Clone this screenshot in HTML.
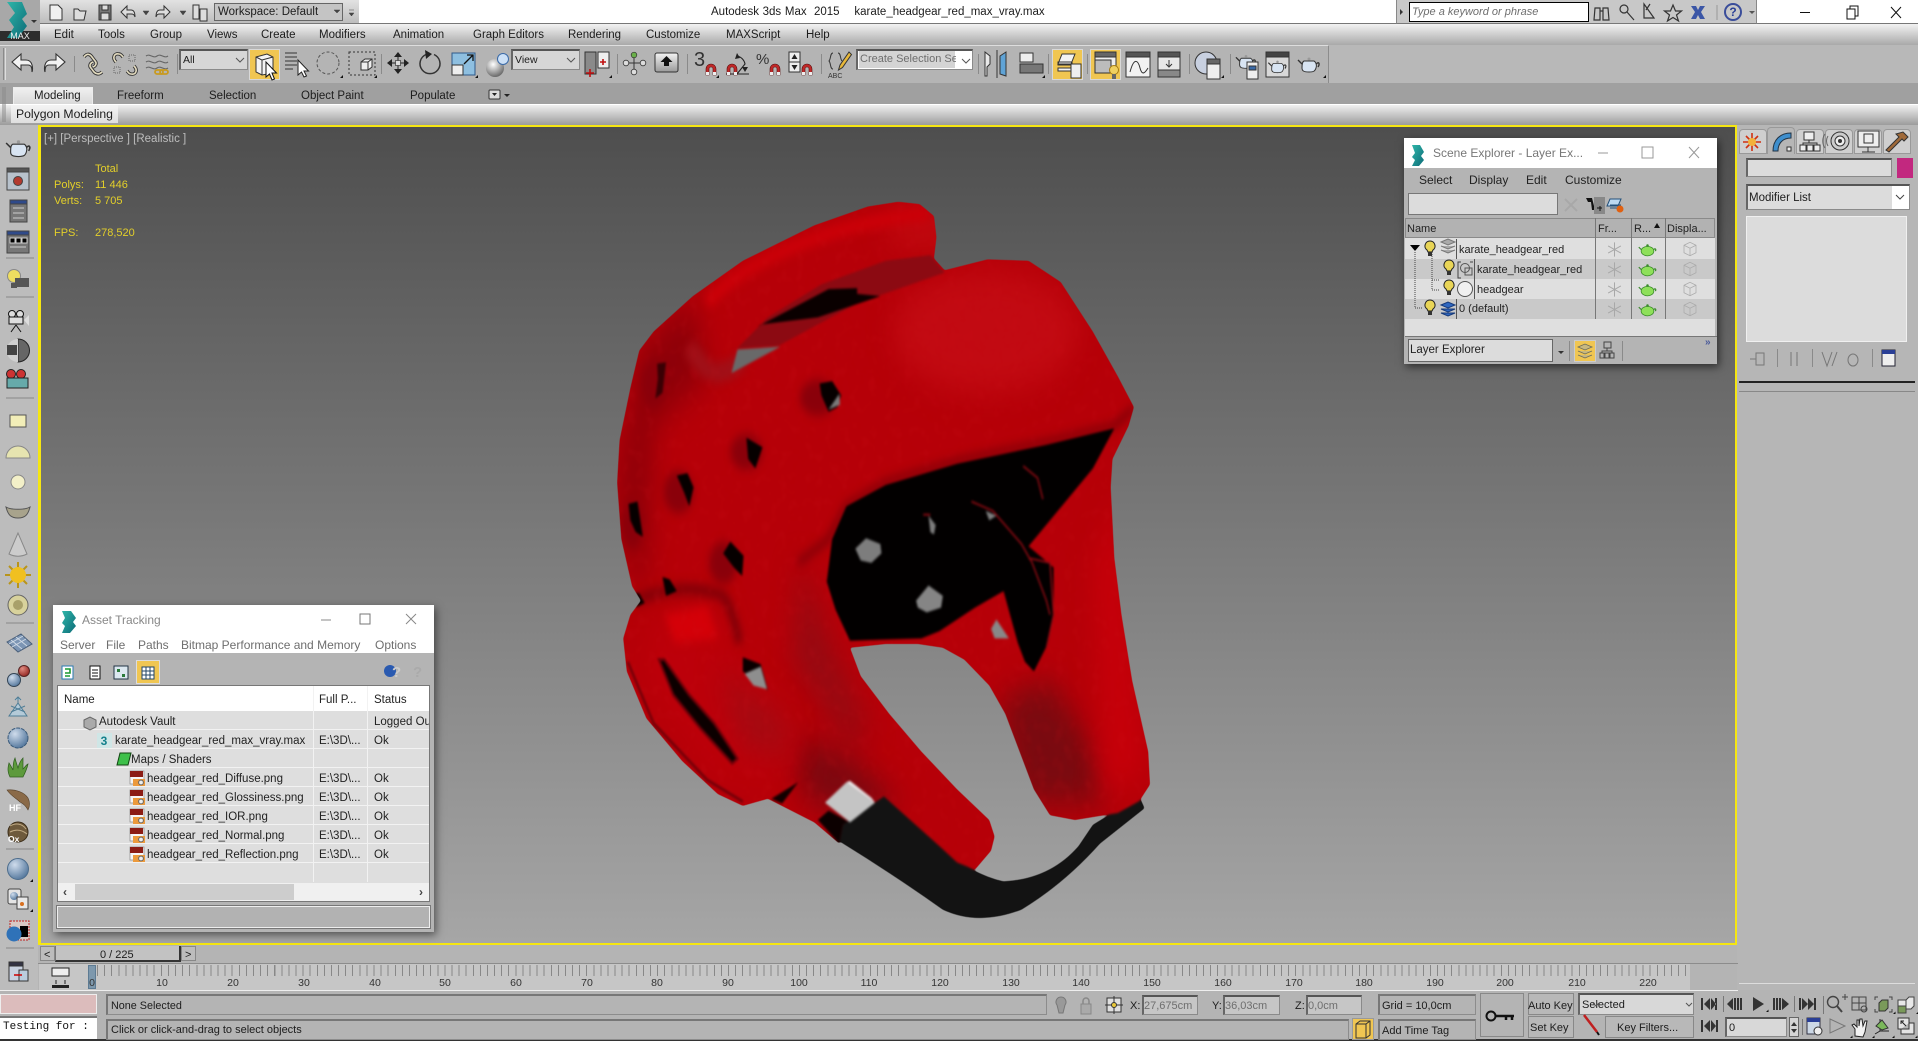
<!DOCTYPE html>
<html><head><meta charset="utf-8"><title>Autodesk 3ds Max 2015</title>
<style>
html,body{margin:0;padding:0;width:1918px;height:1041px;overflow:hidden;background:#b4b4b4}
body{position:relative;font-family:"Liberation Sans",sans-serif;font-size:11.5px;color:#1c1c1c}
.b{position:absolute;box-sizing:border-box}
.t{position:absolute;white-space:nowrap;line-height:14px}
.d{font-size:11.5px;color:#222}
.m{font-size:12px;color:#222}
.s{font-size:11px;color:#222}
.g{color:#6e6e6e}
.ag{color:#6e6e6e;font-size:12px}
.v{color:#e3cf2a;font-size:11px}
.in{position:absolute;box-sizing:border-box;background:#dcdcdc;border:1px solid #8a8a8a;border-top:2px solid #555;border-left:2px solid #666}
.box{position:absolute;box-sizing:border-box;border:1px solid #8c8c8c;border-top:2px solid #777;border-left:2px solid #777}
.sep{position:absolute;width:1px;background:#8a8a8a}
.hl{position:absolute;box-sizing:border-box;background:#f0c652;border:1px solid #d8d8d8}
.n{position:absolute;font-size:10.5px;color:#333;transform:translateX(-50%);line-height:12px;top:977px}
svg{position:absolute;left:0;top:0}
</style></head><body>

<!-- title bar -->
<div class="b" style="left:0;top:0;width:1918px;height:24px;background:#fff;border-bottom:1px solid #777"></div>
<div class="b" style="left:40px;top:0;width:319px;height:24px;background:linear-gradient(#e2e2e2,#bdbdbd);border-bottom:1px solid #777"></div>
<div class="b" style="left:214px;top:3px;width:129px;height:18px;background:#c4c4c4;border:1px solid #666"></div>
<div class="t" style="left:218px;top:5px">Workspace: Default</div>
<div class="t" style="left:711px;top:5px;word-spacing:0.5px">Autodesk 3ds Max&nbsp; 2015 &nbsp;&nbsp; karate_headgear_red_max_vray.max</div>
<div class="b" style="left:1396px;top:0;width:361px;height:24px;background:#c8c8c8;border-bottom:1px solid #777;border-left:1px solid #888;border-right:1px solid #888"></div>
<div class="b" style="left:1409px;top:2px;width:180px;height:20px;background:#fff;border:1px solid #000"></div>
<div class="t g" style="left:1412px;top:5px;font-style:italic;font-size:11px">Type a keyword or phrase</div>

<!-- menu -->
<div class="b" style="left:0;top:24px;width:1918px;height:21px;background:linear-gradient(#f2f2f2,#a9a9a9)"></div>
<div class="t" style="left:54px;top:28px">Edit</div><div class="t" style="left:98px;top:28px">Tools</div><div class="t" style="left:150px;top:28px">Group</div><div class="t" style="left:207px;top:28px">Views</div><div class="t" style="left:261px;top:28px">Create</div><div class="t" style="left:319px;top:28px">Modifiers</div><div class="t" style="left:393px;top:28px">Animation</div><div class="t" style="left:473px;top:28px">Graph Editors</div><div class="t" style="left:568px;top:28px">Rendering</div><div class="t" style="left:646px;top:28px">Customize</div><div class="t" style="left:726px;top:28px">MAXScript</div><div class="t" style="left:806px;top:28px">Help</div>

<!-- main toolbar -->
<div class="b" style="left:0;top:45px;width:1918px;height:38px;background:#b8b8b8"></div>
<div class="b" style="left:0;top:45px;width:1329px;height:39px;background:#b4b4b4;border-top:1px solid #ddd;border-right:1px solid #8c8c8c;border-bottom:1px solid #888"></div>
<div class="b" style="left:3px;top:48px;width:3px;height:32px;border-left:1px solid #8a8a8a;border-right:1px solid #ddd"></div>
<div class="in" style="left:179px;top:49px;width:69px;height:21px;background:#d6d6d6"></div><div class="t" style="left:183px;top:53px;font-size:10.5px">All</div>
<div class="hl" style="left:249px;top:49px;width:31px;height:31px"></div>
<div class="in" style="left:511px;top:49px;width:69px;height:21px;background:#d6d6d6"></div><div class="t" style="left:515px;top:53px;font-size:10.5px">View</div>
<div class="in" style="left:856px;top:49px;width:117px;height:21px;background:#fff"></div><div class="b" style="left:859px;top:51px;width:96px;height:17px;background:#d4d4d4"></div><div class="t g" style="left:860px;top:52px;width:96px;overflow:hidden;font-size:11px">Create Selection Se</div>
<div class="hl" style="left:1052px;top:49px;width:31px;height:31px"></div>
<div class="hl" style="left:1090px;top:49px;width:31px;height:31px"></div>
<div class="sep" style="left:74px;top:56px;height:16px"></div><div class="sep" style="left:177px;top:54px;height:20px"></div><div class="sep" style="left:381px;top:54px;height:20px"></div><div class="sep" style="left:617px;top:54px;height:20px"></div><div class="sep" style="left:687px;top:54px;height:20px"></div><div class="sep" style="left:821px;top:54px;height:20px"></div><div class="sep" style="left:978px;top:54px;height:20px"></div><div class="sep" style="left:1048px;top:54px;height:20px"></div><div class="sep" style="left:1087px;top:54px;height:20px"></div><div class="sep" style="left:1189px;top:54px;height:20px"></div><div class="sep" style="left:1230px;top:54px;height:20px"></div>

<!-- ribbon -->
<div class="b" style="left:0;top:83px;width:1918px;height:21px;background:#a0a0a0"></div>
<div class="b" style="left:13px;top:87px;width:80px;height:18px;background:linear-gradient(#f0f0f0,#d8d8d8);border:1px solid #ececec;border-bottom:none"></div>
<div class="t" style="left:34px;top:89px">Modeling</div><div class="t" style="left:117px;top:89px">Freeform</div><div class="t" style="left:209px;top:89px">Selection</div><div class="t" style="left:301px;top:89px">Object Paint</div><div class="t" style="left:410px;top:89px">Populate</div>
<div class="b" style="left:0;top:104px;width:1918px;height:21px;background:linear-gradient(#f0f0f0,#9c9c9c);border-top:1px solid #fff"></div>
<div class="b" style="left:11px;top:105px;width:107px;height:18px;background:linear-gradient(#f4f4f4,#dedede)"></div>
<div class="t" style="left:16px;top:107px;font-size:12.2px">Polygon Modeling</div>

<!-- left bar / right panel base -->
<div class="b" style="left:0;top:125px;width:38px;height:865px;background:#bcbcbc"></div>
<div class="b" style="left:1737px;top:125px;width:181px;height:865px;background:#b6b6b6"></div>

<!-- viewport -->
<div class="b" style="left:38px;top:125px;width:1699px;height:820px;border:2px solid #f5e612;border-left-width:3px;background:linear-gradient(#4e4e4e,#a6a6a6);overflow:hidden"></div>
<div class="t" style="left:44px;top:132px;color:#bdbdbd;font-size:11.5px">[+] [Perspective ] [Realistic ]</div>
<div class="t v" style="left:95px;top:162px">Total</div>
<div class="t v" style="left:54px;top:178px">Polys:</div><div class="t v" style="left:95px;top:178px">11 446</div>
<div class="t v" style="left:54px;top:194px">Verts:</div><div class="t v" style="left:95px;top:194px">5 705</div>
<div class="t v" style="left:54px;top:226px">FPS:</div><div class="t v" style="left:95px;top:226px">278,520</div>

<!-- helmet -->
<svg width="1918" height="1041" viewBox="0 0 1918 1041">
<defs>
<filter id="bl" filterUnits="userSpaceOnUse" x="-300" y="-300" width="2200" height="2200" color-interpolation-filters="sRGB"><feGaussianBlur stdDeviation="34"/></filter>
<filter id="bs" filterUnits="userSpaceOnUse" x="-300" y="-300" width="2200" height="2200" color-interpolation-filters="sRGB"><feGaussianBlur stdDeviation="10"/></filter>
<filter id="sm" filterUnits="userSpaceOnUse" x="-100" y="-100" width="1800" height="1800" color-interpolation-filters="sRGB"><feGaussianBlur stdDeviation="3"/><feComponentTransfer><feFuncA type="linear" slope="3" intercept="-1"/></feComponentTransfer></filter>
<filter id="nz" x="0" y="0" width="100%" height="100%" color-interpolation-filters="sRGB"><feTurbulence type="fractalNoise" baseFrequency="0.04" numOctaves="2" seed="4"/><feColorMatrix values="0 0 0 0 .82 0 0 0 0 .08 0 0 0 0 .12 0 0 0 3 -1.45"/></filter>
<clipPath id="hc"><path d="M835 25L895 30L935 55L942 100L935 145L965 170L1085 147L1200 150L1290 195L1380 300L1450 395L1495 460L1480 500L1435 570L1430 630L1440 780L1460 900L1490 1040L1535 1190L1540 1260L1510 1295L1450 1320L1330 1335L1260 1325L1215 1270L1175 1190L1135 1110L1090 1050L1020 995L960 970L890 962L800 962L700 970L730 1030L810 1110L900 1190L1000 1270L1090 1335L1105 1370L1095 1400L1050 1440L1000 1425L950 1390L795 1285L680 1345L670 1385L600 1340L470 1290L400 1305L330 1280L230 1210L130 1120L75 1020L65 950L85 900L115 870L90 840L60 740L48 620L55 530L85 420L110 340L150 300L260 225L400 150L600 75L750 35Z"/></clipPath>
</defs>
<g transform="translate(600 190) scale(.35714 .47193)"><g filter="url(#sm)">
<!-- strap -->
<path d="M670 1350L795 1280L950 1390Q1040 1450 1130 1465Q1260 1460 1340 1390L1380 1345L1510 1285L1525 1310L1400 1385Q1300 1470 1180 1525Q1060 1560 960 1525Q820 1450 670 1380Z" fill="#131313"/>
<g clip-path="url(#hc)">
<rect x="0" y="0" width="1600" height="1600" fill="#b60008"/>
<!-- shading -->
<ellipse cx="1080" cy="300" rx="260" ry="130" fill="#c20a12" filter="url(#bl)"/>
<ellipse cx="900" cy="80" rx="110" ry="40" fill="#c20a10" filter="url(#bl)"/>
<path d="M48 620L110 340L260 225L300 400L150 500L130 800L115 870L70 760Z" fill="#8e0009" filter="url(#bl)"/>
<path d="M250 330C300 400 340 400 400 360" stroke="#a01018" stroke-width="40" fill="none" filter="url(#bs)"/>
<path d="M300 240C400 150 650 70 920 50" stroke="#cc0008" stroke-width="30" fill="none" filter="url(#bs)"/>
<path d="M1180 1300L1120 1080L1260 1040L1380 1180L1420 1300Z" fill="#7a0a10" filter="url(#bl)"/>
<path d="M1450 650L1530 1230L1410 1290L1380 800Z" fill="#c6000a" filter="url(#bl)"/>
<path d="M560 780L640 950L760 1150L700 1180L540 1000Z" fill="#960a12" filter="url(#bl)"/>
<path d="M560 1160L700 1200L840 1300L720 1340L560 1280Z" fill="#7c0810" filter="url(#bl)"/>
<path d="M150 900L330 880L390 1000L540 1130L500 1260L320 1240L120 1040Z" fill="#bc000a" filter="url(#bl)"/>
<path d="M180 900L300 880L330 950L210 960Z" fill="#d40008" filter="url(#bs)"/>
<path d="M330 1010L520 1120L540 1200L400 1180Z" fill="#a40a12" filter="url(#bl)"/>
<path d="M100 870C190 840 280 840 345 860C365 880 380 920 390 960" stroke="#7a0008" stroke-width="20" fill="none" filter="url(#bs)"/>
<rect x="0" y="0" width="1600" height="1600" filter="url(#nz)" opacity=".14"/>
<!-- top strap gap -->
<path d="M385 335L470 270L620 200L800 150L925 138L937 150L965 175L720 240L500 330Z" fill="#8c0a12"/>
<path d="M440 290L640 210L720 208L720 220L785 225L610 270L450 285Z" fill="#0a0000"/>
<path d="M368 388L385 338L505 332Z" fill="#696969"/>
<!-- rim -->
<path d="M1495 462L1440 500L1250 535L1000 575L800 620L690 670L640 740L555 790" stroke="#7c0008" stroke-width="14" fill="none" filter="url(#bs)"/>
<!-- interior -->
<path d="M690 670L800 625L1000 580L1250 540L1440 505L1380 590L1200 755L1270 800L1270 900L1255 960L1215 1020L1190 1000L1170 960L1130 850L1050 885L950 935L900 950L700 955L660 890L635 830L650 740Z" fill="#020000"/>
<g fill="none" stroke="#8e0a12" stroke-width="4"><path d="M1040 660L1100 680L1180 750L1210 790L1250 870L1260 900"/><path d="M1185 585L1225 610L1240 655"/><path d="M1200 780L1260 790L1270 900L1250 970"/><path d="M905 688L925 688"/></g>
<g fill="#7d7d7d"><path d="M715 760L745 738L785 750L788 770L760 790L730 785Z"/><path d="M885 870L920 838L960 860L955 885L915 895L890 885Z" fill="#858585"/><path d="M920 690L940 710L935 730L925 725Z"/><path d="M1080 680L1110 690L1090 700Z"/><path d="M1095 930L1110 910L1145 950L1105 950Z" fill="#888"/></g>
<!-- vents -->
<g fill="#8a000a" filter="url(#bs)"><ellipse cx="610" cy="440" rx="50" ry="38"/><ellipse cx="410" cy="555" rx="45" ry="38"/><ellipse cx="220" cy="640" rx="42" ry="45"/><ellipse cx="90" cy="710" rx="30" ry="50"/><ellipse cx="345" cy="790" rx="40" ry="45"/><ellipse cx="150" cy="410" rx="35" ry="50"/></g>
<g fill="#060000"><path d="M615 410L650 405L675 435L665 460L640 470L620 435Z"/><path d="M410 525L455 545L435 590L415 570Z"/><path d="M215 605L245 600L262 630L250 670L235 640Z"/><path d="M80 665L105 660L120 735L100 725L85 700Z"/><path d="M345 770L365 745L402 775L398 818L375 800Z"/><path d="M175 820L195 825L215 850L185 860Z"/><path d="M90 850L110 855L125 875L100 885Z"/><path d="M160 368L185 365L175 430L155 442L162 400Z" fill="#3a0004"/></g>
<path d="M640 465L670 432L672 455Z" fill="#7a7a7a"/>
<!-- front pad -->
<path d="M165 995L180 995L250 1070L320 1130L385 1205L370 1215L280 1140L205 1070Z" fill="#0c0000" stroke="#700008" stroke-width="6"/>
<path d="M78 1000L150 1130L300 1250L400 1296" stroke="#6e0008" stroke-width="6" fill="none"/>
<path d="M400 990L450 1005L470 1060L400 1020Z" fill="#0a0000"/>
<path d="M405 1025L450 1010L468 1058L430 1050Z" fill="#8e8e8e"/>
<path d="M480 1290L555 1255L510 1300Z" fill="#120000"/>
<path d="M610 1335L640 1315L700 1340L670 1385Z" fill="#0c0000"/>
</g>
<path d="M630 1298L690 1255L770 1298L700 1340Z" fill="#c4c4c4"/><path d="M690 1255L770 1298L760 1288L700 1252Z" fill="#eee"/>
</g></g>
</svg>

<!-- Scene Explorer -->
<div class="b" style="left:1404px;top:138px;width:313px;height:226px;background:#b4b4b4;box-shadow:2px 3px 8px rgba(0,0,0,.55)"></div>
<div class="b" style="left:1404px;top:138px;width:313px;height:30px;background:#fff"></div>
<div class="t" style="left:1433px;top:146px;font-size:12px;color:#777">Scene Explorer - Layer Ex...</div>
<div class="t m" style="left:1419px;top:173px">Select</div><div class="t m" style="left:1469px;top:173px">Display</div><div class="t m" style="left:1526px;top:173px">Edit</div><div class="t m" style="left:1565px;top:173px">Customize</div>
<div class="b" style="left:1408px;top:193px;width:150px;height:22px;background:#dcdcdc;border:1px solid #777"></div>
<div class="b" style="left:1405px;top:218px;width:310px;height:20px;background:#b2b2b2;border:1px solid #8a8a8a"></div>
<div class="t s" style="left:1407px;top:222px">Name</div><div class="t s" style="left:1598px;top:222px">Fr...</div><div class="t s" style="left:1634px;top:222px">R...</div><div class="t s" style="left:1667px;top:222px">Displa...</div>
<div class="b" style="left:1405px;top:238px;width:310px;height:98px;background:#dfdfdf"></div>
<div class="b" style="left:1405px;top:259px;width:310px;height:20px;background:#c9c9c9"></div>
<div class="b" style="left:1405px;top:299px;width:310px;height:20px;background:#c9c9c9"></div>
<div class="sep" style="left:1595px;top:218px;height:101px;background:#777"></div><div class="sep" style="left:1631px;top:218px;height:101px;background:#777"></div><div class="sep" style="left:1665px;top:218px;height:101px;background:#777"></div>
<div class="sep" style="left:1456px;top:239px;height:20px;background:#555"></div><div class="sep" style="left:1474px;top:259px;height:40px;background:#555"></div><div class="sep" style="left:1456px;top:299px;height:20px;background:#555"></div>
<div class="t s" style="left:1459px;top:243px">karate_headgear_red</div><div class="t s" style="left:1477px;top:263px">karate_headgear_red</div><div class="t s" style="left:1477px;top:283px">headgear</div><div class="t s" style="left:1459px;top:302px">0 (default)</div>
<div class="b" style="left:1405px;top:336px;width:312px;height:1px;background:#777"></div>
<div class="b" style="left:1408px;top:339px;width:145px;height:23px;background:#dcdcdc;border:1px solid #666"></div>
<div class="t s" style="left:1410px;top:343px;font-size:11.5px">Layer Explorer</div>
<div class="hl" style="left:1574px;top:340px;width:22px;height:22px;border-color:#ccc"></div>
<div class="sep" style="left:1569px;top:341px;height:20px"></div><div class="sep" style="left:1622px;top:341px;height:20px"></div>
<div class="t" style="left:1705px;top:336px;font-size:10px;color:#4a5a9a;font-weight:bold">»</div>

<!-- Asset Tracking -->
<div class="b" style="left:53px;top:605px;width:381px;height:327px;background:#b4b4b4;box-shadow:2px 3px 8px rgba(0,0,0,.5)"></div>
<div class="b" style="left:53px;top:605px;width:381px;height:48px;background:#fff"></div>
<div class="t" style="left:82px;top:613px;font-size:12px;color:#888">Asset Tracking</div>
<div class="t ag" style="left:60px;top:638px">Server</div><div class="t ag" style="left:106px;top:638px">File</div><div class="t ag" style="left:138px;top:638px">Paths</div><div class="t ag" style="left:181px;top:638px">Bitmap Performance and Memory</div><div class="t ag" style="left:375px;top:638px">Options</div>
<div class="hl" style="left:136px;top:660px;width:24px;height:24px;border-color:#ddd"></div>
<div class="b" style="left:57px;top:685px;width:373px;height:217px;background:#dedede;border:1px solid #777;overflow:hidden"></div>
<div class="b" style="left:58px;top:686px;width:371px;height:25px;background:#fff"></div>
<div class="t d" style="left:64px;top:693px">Name</div><div class="t d" style="left:319px;top:693px">Full P...</div><div class="t d" style="left:374px;top:693px">Status</div>
<div class="b" style="left:58px;top:729px;width:371px;height:1px;background:#f2f2f2"></div><div class="b" style="left:58px;top:748px;width:371px;height:1px;background:#f2f2f2"></div><div class="b" style="left:58px;top:767px;width:371px;height:1px;background:#f2f2f2"></div><div class="b" style="left:58px;top:786px;width:371px;height:1px;background:#f2f2f2"></div><div class="b" style="left:58px;top:805px;width:371px;height:1px;background:#f2f2f2"></div><div class="b" style="left:58px;top:824px;width:371px;height:1px;background:#f2f2f2"></div><div class="b" style="left:58px;top:843px;width:371px;height:1px;background:#f2f2f2"></div><div class="b" style="left:58px;top:862px;width:371px;height:1px;background:#f2f2f2"></div>
<div class="sep" style="left:313px;top:686px;height:196px;background:#f2f2f2"></div><div class="sep" style="left:367px;top:686px;height:196px;background:#f2f2f2"></div>
<div class="t d" style="left:99px;top:715px">Autodesk Vault</div><div class="t d" style="left:374px;top:715px;width:55px;overflow:hidden">Logged Out</div>
<div class="t d" style="left:115px;top:734px">karate_headgear_red_max_vray.max</div><div class="t d" style="left:319px;top:734px">E:\3D\...</div><div class="t d" style="left:374px;top:734px">Ok</div>
<div class="t d" style="left:131px;top:753px">Maps / Shaders</div>
<div class="t d" style="left:147px;top:772px">headgear_red_Diffuse.png</div><div class="t d" style="left:319px;top:772px">E:\3D\...</div><div class="t d" style="left:374px;top:772px">Ok</div>
<div class="t d" style="left:147px;top:791px">headgear_red_Glossiness.png</div><div class="t d" style="left:319px;top:791px">E:\3D\...</div><div class="t d" style="left:374px;top:791px">Ok</div>
<div class="t d" style="left:147px;top:810px">headgear_red_IOR.png</div><div class="t d" style="left:319px;top:810px">E:\3D\...</div><div class="t d" style="left:374px;top:810px">Ok</div>
<div class="t d" style="left:147px;top:829px">headgear_red_Normal.png</div><div class="t d" style="left:319px;top:829px">E:\3D\...</div><div class="t d" style="left:374px;top:829px">Ok</div>
<div class="t d" style="left:147px;top:848px">headgear_red_Reflection.png</div><div class="t d" style="left:319px;top:848px">E:\3D\...</div><div class="t d" style="left:374px;top:848px">Ok</div>
<div class="b" style="left:58px;top:883px;width:371px;height:18px;background:#f0f0f0"></div>
<div class="b" style="left:75px;top:884px;width:219px;height:16px;background:#cdcdcd"></div>
<div class="t" style="left:63px;top:885px;font-weight:bold;font-size:12px;color:#444">‹</div><div class="t" style="left:419px;top:885px;font-weight:bold;font-size:12px;color:#444">›</div>
<div class="b" style="left:57px;top:906px;width:373px;height:22px;background:#b2b2b2;border:1px solid #eee;outline:1px solid #777"></div>

<!-- right panel -->
<div class="b" style="left:1739px;top:129px;width:28px;height:25px;background:#cfcfcf;border:1px solid #999;border-radius:4px 4px 0 0"></div>
<div class="b" style="left:1767px;top:127px;width:28px;height:27px;background:#b6b6b6;border:1px solid #999;border-bottom:none;border-radius:4px 4px 0 0"></div>
<div class="b" style="left:1796px;top:129px;width:28px;height:25px;background:#cfcfcf;border:1px solid #999;border-radius:4px 4px 0 0"></div>
<div class="b" style="left:1825px;top:129px;width:28px;height:25px;background:#cfcfcf;border:1px solid #999;border-radius:4px 4px 0 0"></div>
<div class="b" style="left:1854px;top:129px;width:28px;height:25px;background:#cfcfcf;border:1px solid #999;border-radius:4px 4px 0 0"></div>
<div class="b" style="left:1883px;top:129px;width:28px;height:25px;background:#cfcfcf;border:1px solid #999;border-radius:4px 4px 0 0"></div>
<div class="in" style="left:1746px;top:158px;width:146px;height:19px"></div>
<div class="b" style="left:1897px;top:158px;width:16px;height:20px;background:#c2287f"></div>
<div class="in" style="left:1746px;top:184px;width:164px;height:26px;background:#dcdcdc"></div><div class="b" style="left:1892px;top:186px;width:17px;height:23px;background:#fff"></div>
<div class="t" style="left:1749px;top:191px;font-size:11.5px">Modifier List</div>
<div class="b" style="left:1746px;top:216px;width:161px;height:126px;background:#dcdcdc;border:1px solid #f0f0f0"></div>
<div class="sep" style="left:1777px;top:349px;height:18px"></div><div class="sep" style="left:1812px;top:349px;height:18px"></div><div class="sep" style="left:1872px;top:349px;height:18px"></div>
<div class="b" style="left:1739px;top:381px;width:176px;height:2px;background:#222"></div>
<div class="b" style="left:1739px;top:391px;width:176px;height:1px;background:#888"></div>
<div class="b" style="left:1739px;top:983px;width:176px;height:1px;background:#ddd"></div>

<!-- time slider -->
<div class="b" style="left:38px;top:945px;width:1699px;height:18px;background:#b4b4b4"></div>
<div class="b" style="left:40px;top:946px;width:15px;height:15px;background:#bcbcbc;border:1px solid #888"></div>
<div class="b" style="left:55px;top:946px;width:126px;height:16px;background:#c2c2c2;border-bottom:2px solid #333;border-right:2px solid #333;border-left:1px solid #777"></div>
<div class="b" style="left:181px;top:946px;width:15px;height:15px;background:#bcbcbc;border:1px solid #888"></div>
<div class="t" style="left:44px;top:948px;font-size:11px">&lt;</div><div class="t" style="left:185px;top:948px;font-size:11px">&gt;</div>
<div class="t" style="left:100px;top:948px;font-size:11px">0 / 225</div>
<div class="b" style="left:38px;top:963px;width:1700px;height:1px;background:#8c8c8c"></div>
<div class="b" style="left:39px;top:964px;width:1651px;height:26px;background:#c6c6c6"></div>
<div class="b" style="left:97px;top:965px;width:1589px;height:11px;background:repeating-linear-gradient(90deg,#888 0,#888 1px,transparent 1px,transparent 7.09px)"></div>
<div class="b" style="left:88px;top:965px;width:8px;height:24px;background:#7d98ad;border:1px solid #5d7b93"></div>
<div class="n" style="left:92px;top:977px">0</div>
<div class="n" style="left:162px">10</div><div class="n" style="left:233px">20</div><div class="n" style="left:304px">30</div><div class="n" style="left:375px">40</div><div class="n" style="left:445px">50</div><div class="n" style="left:516px">60</div><div class="n" style="left:587px">70</div><div class="n" style="left:657px">80</div><div class="n" style="left:728px">90</div><div class="n" style="left:799px">100</div><div class="n" style="left:869px">110</div><div class="n" style="left:940px">120</div><div class="n" style="left:1011px">130</div><div class="n" style="left:1081px">140</div><div class="n" style="left:1152px">150</div><div class="n" style="left:1223px">160</div><div class="n" style="left:1294px">170</div><div class="n" style="left:1364px">180</div><div class="n" style="left:1435px">190</div><div class="n" style="left:1505px">200</div><div class="n" style="left:1577px">210</div><div class="n" style="left:1648px">220</div>

<!-- status -->
<div class="b" style="left:0;top:990px;width:1918px;height:51px;background:#b4b4b4;border-bottom:2px solid #333"></div>
<div class="b" style="left:0;top:990px;width:1738px;height:1px;background:#eee"></div>
<div class="b" style="left:0;top:994px;width:97px;height:20px;background:#dcbcbc;border:1px solid #eee"></div>
<div class="b" style="left:0;top:1016px;width:97px;height:23px;background:#fff;border-top:2px solid #777"></div>
<div class="t" style="left:3px;top:1020px;font-family:'Liberation Mono',monospace;font-size:11px;width:93px;overflow:hidden;color:#111">Testing for :</div>
<div class="box" style="left:106px;top:994px;width:941px;height:21px"></div>
<div class="box" style="left:106px;top:1019px;width:1243px;height:21px"></div>
<div class="t" style="left:111px;top:999px;font-size:10.8px">None Selected</div>
<div class="t" style="left:111px;top:1023px;font-size:11px">Click or click-and-drag to select objects</div>
<div class="t" style="left:1130px;top:999px;font-size:11px">X:</div><div class="in" style="left:1142px;top:995px;width:56px;height:20px;background:#c6c6c6"></div><div class="t g" style="left:1144px;top:999px;font-size:11px">27,675cm</div>
<div class="t" style="left:1212px;top:999px;font-size:11px">Y:</div><div class="in" style="left:1223px;top:995px;width:57px;height:20px;background:#c6c6c6"></div><div class="t g" style="left:1225px;top:999px;font-size:11px">36,03cm</div>
<div class="t" style="left:1295px;top:999px;font-size:11px">Z:</div><div class="in" style="left:1306px;top:995px;width:56px;height:20px;background:#c6c6c6"></div><div class="t g" style="left:1308px;top:999px;font-size:11px">0,0cm</div>
<div class="box" style="left:1378px;top:994px;width:98px;height:21px"></div><div class="t" style="left:1382px;top:999px;font-size:11px">Grid = 10,0cm</div>
<div class="hl" style="left:1352px;top:1018px;width:22px;height:22px;border-color:#999"></div>
<div class="box" style="left:1378px;top:1019px;width:98px;height:21px"></div><div class="t" style="left:1382px;top:1024px;font-size:11px">Add Time Tag</div>
<div class="b" style="left:1480px;top:993px;width:44px;height:44px;background:#b4b4b4;border:1px solid #888"></div>
<div class="b" style="left:1528px;top:993px;width:46px;height:22px;background:#b8b8b8;border:1px solid #888"></div><div class="t" style="left:1528px;top:999px;font-size:11px">Auto Key</div>
<div class="b" style="left:1528px;top:1016px;width:46px;height:22px;background:#b8b8b8;border:1px solid #888"></div><div class="t" style="left:1530px;top:1021px;font-size:11px">Set Key</div>
<div class="in" style="left:1578px;top:993px;width:116px;height:22px;background:#d8d8d8"></div><div class="t" style="left:1582px;top:998px;font-size:11px">Selected</div>
<div class="b" style="left:1605px;top:1016px;width:89px;height:22px;background:#b8b8b8;border:1px solid #888"></div><div class="t" style="left:1617px;top:1021px;font-size:11px">Key Filters...</div>
<div class="in" style="left:1725px;top:1017px;width:62px;height:20px;background:#d8d8d8"></div><div class="t" style="left:1729px;top:1021px;font-size:11px">0</div>
<div class="b" style="left:1789px;top:1017px;width:10px;height:20px;background:#d4d4d4;border:1px solid #666"></div>
<div class="sep" style="left:1723px;top:996px;height:16px;background:#777"></div><div class="sep" style="left:1794px;top:996px;height:16px;background:#777"></div><div class="sep" style="left:1823px;top:996px;height:18px;background:#777"></div><div class="sep" style="left:1802px;top:1019px;height:16px;background:#777"></div>

<!-- icon overlay -->
<svg width="1918" height="1041" viewBox="0 0 1918 1041">
<defs>
<linearGradient id="lg" x1="0" x2="0" y1="0" y2="1"><stop offset="0" stop-color="#f4f4f4"/><stop offset="1" stop-color="#9a9a9a"/></linearGradient>
<linearGradient id="cy" x1="0" x2="1" y1="0" y2="1"><stop offset="0" stop-color="#2fb5a8"/><stop offset="1" stop-color="#0d6c78"/></linearGradient>
<radialGradient id="bb" cx=".35" cy=".3" r=".8"><stop offset="0" stop-color="#cfdcec"/><stop offset="1" stop-color="#4a6f96"/></radialGradient>
<radialGradient id="rb" cx=".35" cy=".3" r=".8"><stop offset="0" stop-color="#e08a80"/><stop offset="1" stop-color="#8c1e1a"/></radialGradient>
<radialGradient id="wb" cx=".4" cy=".3" r=".8"><stop offset="0" stop-color="#fff"/><stop offset="1" stop-color="#555"/></radialGradient>
<symbol id="bulb" viewBox="0 0 12 18"><path d="M6 1a5 5 0 0 1 3 9l-1 2H4l-1-2a5 5 0 0 1 3-9z" fill="#e9d557" stroke="#222"/><rect x="4" y="12" width="4" height="4" fill="#333"/></symbol>
<symbol id="pot" viewBox="0 0 24 24"><path d="M7 9h10c2 1 3 4 2 7s-2 4-7 4-7-1-7-4 0-6 2-7z" fill="#d8e4f2" stroke="#333"/><path d="M5 12L1 8M19 12c3-3 4 0 2 3" fill="none" stroke="#333" stroke-width="1.4"/><circle cx="12" cy="7" r="1.5" fill="#999"/></symbol>
<symbol id="gpot" viewBox="0 0 24 24"><ellipse cx="12" cy="14" rx="8" ry="6" fill="#8ee05a" stroke="#3a8a2a"/><path d="M4 12L1 9M20 12c2-2 3 0 2 2" stroke="#3a8a2a" fill="none" stroke-width="1.5"/><circle cx="12" cy="7" r="1.6" fill="#3a8a2a"/></symbol>
<symbol id="flake" viewBox="0 0 24 24"><path d="M12 2v20M3 7l18 10M21 7L3 17" stroke="#a8a8a8" stroke-width="1.4"/></symbol>
<symbol id="cube" viewBox="0 0 24 24"><path d="M4 7l8-4 8 4v10l-8 4-8-4zM4 7l8 4 8-4M12 11v10" fill="none" stroke="#aaa"/></symbol>
<symbol id="png" viewBox="0 0 16 16"><rect x="1" y="1" width="14" height="13" fill="#f6f6f6" stroke="#888" stroke-width=".7"/><rect x="1" y="1" width="13" height="6" fill="#8c1c14"/><rect x="4" y="9" width="12" height="7" fill="#ec9a3c"/><circle cx="12" cy="12.500" r="2.400" fill="#eee" stroke="#666"/></symbol>
<symbol id="mag" viewBox="0 0 14 14"><path d="M2 13V7a5 5 0 0 1 10 0v6H9V7a2 2 0 0 0-4 0v6z" fill="#c02828" stroke="#5a1010" stroke-width=".6"/><rect x="2" y="10" width="3" height="3" fill="#eee"/><rect x="9" y="10" width="3" height="3" fill="#eee"/></symbol>
</defs>
<!-- app logo -->
<rect x="0" y="0" width="40" height="41" fill="#a8a8a8"/><rect x="0" y="31" width="40" height="10" fill="#2c2c2c"/>
<path d="M7 2H22L27 14L22 19L27 26L18 38H7L14 27L9 20L15 13Z" fill="url(#cy)"/>
<text x="20" y="39" font-size="9" fill="#eee" text-anchor="middle" font-family="Liberation Sans">MAX</text>
<path d="M31 20l3 3 3-3z" fill="#333"/>
<!-- QAT -->
<g fill="#f0f0f0" stroke="#333"><path d="M50 5h8l4 4v11H50z"/><path d="M74 9h4l2 2h6l-2 9H74z" fill="#ddd"/><path d="M99 5h12v15H99z" fill="#777"/><rect x="102" y="5" width="6" height="5" fill="#ddd"/><rect x="101" y="13" width="8" height="7" fill="#ddd"/>
<path d="M122 12l6-6v4h4c3 0 4 3 4 7-1-3-2-3-4-3h-4v4z" fill="#ddd" transform="translate(-1 0)"/><path d="M170 12l-6-6v4h-4c-3 0-4 3-4 7 1-3 2-3 4-3h4v4z" fill="#ddd"/><path d="M193 5h6v14h-6zM200 9h7v12h-7z" fill="#ddd"/></g>
<path d="M143 11l3 4 3-4zM180 11l3 4 3-4zM334 10l3 3 3-3zM349 10h5M349 13l2.500 3 2.500-3z" fill="#444" stroke="#444" stroke-width=".5"/>
<!-- search icons -->
<g fill="none" stroke="#333" stroke-width="1.2"><path d="M1595 8h5v12h-6zM1603 8h5l1 12h-6zM1600 11h3"/><circle cx="1624" cy="9" r="4"/><path d="M1627 12l7 8M1644 4l10 14h-10zM1650 4l-4 6"/><path d="M1673 5l2.500 6h6l-5 4 2 6-5.500-3.500-5.500 3.500 2-6-5-4h6z"/><circle cx="1733" cy="12" r="8" stroke="#3a4d9a" stroke-width="2"/></g>
<path d="M1691 6h5l2 4 2-4h5l-4 6 4 7h-5l-2-4-2 4h-5l4-7z" fill="#3b56a6"/>
<text x="1733" y="16" font-size="12" font-weight="bold" fill="#2a3f96" text-anchor="middle" font-family="Liberation Sans">?</text>
<path d="M1749 11l3 3 3-3z" fill="#555"/><path d="M1400 9l3 3-3 3z" fill="#333"/><path d="M1717 5v15" stroke="#999"/>
<!-- window ctrl -->
<g fill="none" stroke="#111"><path d="M1800 12.500h10M1847 9h8v10h-8zM1850 9v-3h8v10h-3M1891 7l10 11M1901 7l-10 11"/></g>
<!-- main toolbar icons -->
<g fill="#f2f2f2" stroke="#333" stroke-width="1.1">
<path d="M21 54L12 62l9 8v-5h7c3 0 4 2 4 7 1-3 1-12-6-12h-5z"/>
<path d="M56 54l9 8-9 8v-5h-7c-3 0-4 2-4 7-1-3-1-12 6-12h5z"/>
</g>
<g fill="none" stroke="#333" stroke-width="3.400"><path d="M84 57c3-4 6-3 8 0l3 4c2 2 1 5-2 6" /><path d="M102 72c-3 3-6 2-8 0l-3-4c-2-2-1-5 2-6"/></g>
<g fill="none" stroke="#e4dcc0" stroke-width="1.600"><path d="M84 57c3-4 6-3 8 0l3 4c2 2 1 5-2 6" /><path d="M102 72c-3 3-6 2-8 0l-3-4c-2-2-1-5 2-6"/></g>
<g fill="none" stroke="#333" stroke-width="3.400"><path d="M116 62c-4-4-2-9 3-8 2 0 3 2 4 3"/><path d="M134 66c4 4 2 9-3 8-2 0-3-2-4-3"/></g>
<g fill="none" stroke="#e4dcc0" stroke-width="1.600"><path d="M116 62c-4-4-2-9 3-8 2 0 3 2 4 3"/><path d="M134 66c4 4 2 9-3 8-2 0-3-2-4-3"/></g>
<path d="M129 55h6v6h-6zM114 67h6v6h-6z" fill="none" stroke="#666" stroke-dasharray="1 1"/>
<path d="M146 56c4-3 7 3 11 0s7 3 11 0M146 62c4-3 7 3 11 0s7 3 11 0M146 68c4-3 7 3 11 0s7 3 11 0" fill="none" stroke="#666" stroke-width="1.100"/>
<g fill="none" stroke="#c89a20" stroke-width="1.800"><rect x="155" y="70" width="8" height="4" rx="2"/><rect x="160" y="70" width="8" height="4" rx="2"/></g>
<path d="M256 57l11-3 6 3v16l-11 2-6-3z" fill="#f4f4f4" stroke="#333"/><path d="M256 57l6 3v15M262 60l11-3" fill="none" stroke="#333"/>
<path d="M266 62v15l3.500-3 2.500 6 2.500-1-2.500-6h4.500z" fill="#fff" stroke="#111"/>
<path d="M285 53h12M285 57h12M285 61h12M285 65h12M285 69h8" fill="none" stroke="#333"/><path d="M298 60v15l3.500-3 2.500 5 2.500-1-2.500-5h4.500z" fill="#fff" stroke="#222"/>
<circle cx="328" cy="63" r="11" fill="none" stroke="#555" stroke-dasharray="3 2"/>
<path d="M349 52h26v23h-26z" fill="none" stroke="#333" stroke-dasharray="2 2"/><path d="M361 62l4-3 7 0v8l-4 3h-7z" fill="#f0f0f0" stroke="#333"/><path d="M361 62h7v8M368 62l4-3" fill="none" stroke="#333"/>
<g fill="#222"><path d="M398 52l-4 5h8zM398 74l-4-5h8zM387 63l5-4v8zM409 63l-5-4v8z"/></g><path d="M392 63h12M398 57v12" stroke="#222"/><rect x="395.500" y="60.500" width="5" height="5" fill="#ddd" stroke="#222" stroke-width=".6"/>
<path d="M434 54.500a10 10 0 1 1-8 0" fill="none" stroke="#333" stroke-width="1.500"/><path d="M425 50l1 9 6-5z" fill="#222"/>
<rect x="452" y="53" width="23" height="22" fill="#8ebfe0" stroke="#2f5a8a"/><rect x="452" y="65" width="11" height="10" fill="#eee" stroke="#333"/><path d="M464 64l9-9M467 55h6v6" fill="none" stroke="#111" stroke-width="1.300"/>
<circle cx="495" cy="68" r="9" fill="url(#wb)"/><circle cx="503" cy="59" r="5.500" fill="#cce0f6" stroke="#3a6aa8"/>
<rect x="585" y="52" width="11" height="22" fill="#8a8a8a" stroke="#333"/><rect x="598" y="52" width="11" height="16" fill="#eee" stroke="#333"/><path d="M590 69v8M586 73h8M603 59v6M600 62h6" stroke="#c01010" stroke-width="1.600" fill="none"/>
<path d="M634 58v11M629 63h11" stroke="#333"/><circle cx="634" cy="55" r="2.800" fill="#6ab04a" stroke="#333" stroke-width=".7"/><circle cx="626" cy="63" r="2.800" fill="#ddd" stroke="#333" stroke-width=".8"/><circle cx="643" cy="63" r="2.800" fill="#ddd" stroke="#333" stroke-width=".8"/><circle cx="634" cy="72" r="2.800" fill="#ddd" stroke="#333" stroke-width=".8"/>
<rect x="655" y="53" width="23" height="19" rx="2" fill="url(#lg)" stroke="#333"/><path d="M666.500 56l-6 6h3.500v4h5v-4h3.500z" fill="#111"/>
<text x="694" y="66" font-size="20" fill="#333" font-family="Liberation Sans">3</text><use href="#mag" x="704" y="62" width="14" height="14"/>
<path d="M737 74L745 64a10 10 0 0 0-8-8M726 74h23" fill="none" stroke="#222" stroke-width="1.100"/><path d="M737 53l-2 6 5-1z" fill="#222"/><path d="M745 72l-3-5h6z" fill="#222"/><use href="#mag" x="725" y="62" width="14" height="14"/>
<text x="756" y="64" font-size="15" fill="#333" font-family="Liberation Sans">%</text><use href="#mag" x="768" y="62" width="14" height="14"/>
<g fill="#eee" stroke="#333"><rect x="789" y="52" width="11" height="20"/><path d="M789 62h11" fill="none"/><path d="M794.500 54l-3 5h6zM794.500 70l-3-5h6z" fill="#222" stroke="none"/></g><use href="#mag" x="800" y="62" width="14" height="14"/>
<path d="M833 53c-3 0-2 6-4 8 2 2 1 8 4 8M838 53c3 0 2 6 4 8" fill="none" stroke="#333"/><path d="M849 52l-9 13-1.500 5 4-2.500 9-13z" fill="#e8b83a" stroke="#333"/>
<text x="828" y="78" font-size="7" fill="#333" font-family="Liberation Sans">ABC</text>
<path d="M962 59l4 4 4-4" fill="none" stroke="#555"/>
<g stroke="#333" fill="#ddd"><path d="M985 52l5 4v8l-3 3v9h-2z" fill="#e8e8e8"/><path d="M1006 52l-6 4v18l6 2z" fill="#5fa3d6"/><path d="M997 50v28" fill="none"/><path d="M1020 53h13v9h-13z" fill="#eee"/><path d="M1020 64h23v9h-23z" fill="#777"/></g>
<g stroke="#333" fill="#f3f3f3"><path d="M1062 54h13l-4 10h-13zM1058 62h14v3h-14zM1058 68h14v3h-14z"/><rect x="1071" y="64" width="10" height="14" fill="#eee"/></g>
<g stroke="#333"><rect x="1095" y="52" width="21" height="21" fill="#eee"/><rect x="1095" y="52" width="21" height="5" fill="#666"/><rect x="1095" y="60" width="16" height="13" fill="#bcbcbc"/></g><circle cx="1114" cy="70" r="4.500" fill="#f0d060" stroke="#a57a10"/><rect x="1112" y="74" width="4" height="5" fill="#666"/>
<g stroke="#333"><rect x="1126" y="52" width="24" height="25" fill="#f2f2f2"/><rect x="1126" y="52" width="24" height="5" fill="#555"/><path d="M1130 72c4-15 8-12 10-4s5 5 8 0" fill="none"/><rect x="1158" y="52" width="22" height="25" fill="#e8e8e8"/><rect x="1158" y="52" width="22" height="5" fill="#555"/><rect x="1158" y="70" width="22" height="7" fill="#888"/><path d="M1169 60v6M1166 64l3 3 3-3" fill="none"/></g>
<g stroke="#333"><circle cx="1206" cy="63" r="11" fill="#c8d0e0"/><rect x="1207" y="59" width="13" height="20" fill="#eee"/><rect x="1207" y="59" width="13" height="5" fill="#666"/></g>
<use href="#pot" x="1235" y="50" width="22" height="22"/><g stroke="#333"><rect x="1247" y="62" width="11" height="17" fill="#eee"/><rect x="1249" y="66" width="7" height="4" fill="#3a6aa8"/></g>
<g stroke="#333"><rect x="1266" y="52" width="23" height="25" fill="#d8d8d8"/><rect x="1266" y="52" width="23" height="5" fill="#444"/></g><use href="#pot" x="1267" y="56" width="21" height="20"/>
<use href="#pot" x="1297" y="52" width="24" height="24"/>
<path d="M236 58l4 4 4-4M567 58l4 4 4-4" fill="none" stroke="#555"/>
<g fill="#111"><path d="M340 78h3v-3zM374 78h3v-3zM475 78h3v-3zM609 78h3v-3zM716 78h3v-3zM1042 78h3v-3zM1221 78h3v-3zM1323 78h3v-3z"/></g>
<rect x="489" y="90" width="11" height="9" rx="1" fill="#ddd" stroke="#333"/><path d="M492 93l2.500 3 2.500-3zM504 94l3 3 3-3z" fill="#222"/>
<path d="M3 87v35M5 87v35" stroke="#8a8a8a"/>
<!-- left bar -->
<use href="#pot" x="5" y="134" width="27" height="27"/>
<g stroke="#444"><rect x="7" y="168" width="22" height="22" fill="#b8c2cc"/><rect x="7" y="168" width="22" height="4" fill="#555"/><circle cx="18" cy="181" r="4.500" fill="#b23a30"/>
<rect x="10" y="200" width="17" height="22" fill="#777"/><rect x="10" y="200" width="17" height="4" fill="#2f4a8a"/><path d="M13 208h11M13 213h11M13 218h11" stroke="#ccc"/>
<rect x="7" y="231" width="22" height="22" fill="#777"/><rect x="7" y="231" width="22" height="4" fill="#2f4a8a"/><path d="M10 238h5v5h-5zM16 238h5v5h-5zM22 238h5v5h-5zM10 247h16" stroke="#ccc"/></g>
<path d="M6 258h28M6 297h28M6 398h28" stroke="#888"/>
<circle cx="14" cy="276" r="6.500" fill="#eedd60" stroke="#888"/><rect x="11" y="283" width="6" height="5" fill="#555"/><rect x="15" y="278" width="14" height="9" fill="#555"/>
<g stroke="#111" fill="#ddd"><circle cx="12" cy="314" r="3.500"/><circle cx="20" cy="314" r="3.500"/><rect x="9" y="317" width="14" height="7"/><path d="M16 325l-5 7M16 325l5 7" fill="none"/></g><path d="M24 320l5-5v11z" fill="#ddd"/>
<path d="M18 339a11 11 0 0 1 0 23z" fill="#666" stroke="#222"/><path d="M18 339a11 11 0 0 0 0 23" fill="#d0d0d0"/><rect x="7" y="345" width="10" height="10" fill="#444"/>
<g stroke="#222"><circle cx="11" cy="374" r="4.500" fill="#c33"/><circle cx="21" cy="374" r="4.500" fill="#c33"/><rect x="7" y="378" width="21" height="10" fill="#6aa"/></g>
<rect x="10" y="415" width="16" height="12" fill="#f2eeb8" stroke="#555"/>
<path d="M6 458a12 12 0 0 1 24 0z" fill="#e6e4b0" stroke="#888"/>
<circle cx="18" cy="482" r="7" fill="#f3f0c8" stroke="#888"/>
<path d="M6 507c5 3 19 3 24 0-2 8-5 11-12 11s-10-3-12-11z" fill="#a8a38c" stroke="#555"/>
<path d="M18 533l-9 21c6 3 12 3 18 0z" fill="#ccc" stroke="#888"/>
<g stroke="#b8941a" stroke-width="2"><path d="M18 562v26M5 575h26M9 566l18 18M27 566l-18 18"/></g><circle cx="18" cy="575" r="8" fill="#f0c020"/>
<circle cx="18" cy="605" r="10" fill="#d8d29c" stroke="#666"/><circle cx="18" cy="605" r="5" fill="#a8a06a"/>
<path d="M6 623h28" stroke="#888"/>
<path d="M7 642l14-8 11 10-14 8z" fill="#7c95b4" stroke="#4a5f7a"/><path d="M11 640l11 9M16 637l11 9M12 647l14-8M9 644l14-8" stroke="#d0dae6" stroke-width=".9" fill="none"/>
<path d="M14 678l10-8" stroke="#888" stroke-width="4"/><circle cx="14" cy="680" r="6.500" fill="url(#bb)" stroke="#345"/><circle cx="24" cy="671" r="5.500" fill="url(#rb)" stroke="#522"/>
<path d="M18 697v6M15 700l3-3 3 3M18 703l-9 13h18zM11 712l14-6M25 712l-14-6" fill="#b4cad8" stroke="#4f7d96"/>
<circle cx="18" cy="738" r="10" fill="url(#bb)" stroke="#3a5a7a" stroke-dasharray="4 1"/>
<path d="M10 777c-3-6-2-10-1-14 2 3 3 5 4 7 0-4 0-8 2-12 1 4 2 7 3 10 1-4 3-8 5-10 0 5 0 8 0 11 2-2 3-4 5-5-1 5-3 9-5 13z" fill="#5d9a3c" stroke="#2f5e1f" stroke-width=".7"/>
<path d="M7 790c8-1 17 2 21 8 2 4 2 8 0 12-2-4-4-6-8-8-4-4-9-6-13-12z" fill="#8a6a48" stroke="#54402a" stroke-width=".6"/><text x="9" y="811" font-size="9" font-weight="bold" fill="#fff" font-family="Liberation Sans">HF</text>
<circle cx="18" cy="832" r="10" fill="#6e5a3c" stroke="#3a2c18"/><path d="M10 826c5-3 12-3 16 3M10 832c6-3 12-2 17 2" fill="none" stroke="#c0aa84"/><text x="8" y="842" font-size="8.500" font-weight="bold" fill="#fff" font-family="Liberation Sans">Ox</text>
<path d="M6 849h28" stroke="#888"/>
<circle cx="18" cy="869" r="10.500" fill="url(#bb)" stroke="#4c6c8c"/><path d="M30 882h3v-3z" fill="#111"/>
<rect x="8" y="889" width="13" height="15" rx="2" fill="#e4e4e4" stroke="#444"/><circle cx="14" cy="896" r="4" fill="url(#bb)"/><rect x="17" y="897" width="11" height="12" fill="#e8e8e8" stroke="#444"/><circle cx="22" cy="904" r="2" fill="#d87020"/><path d="M30 912h3v-3z" fill="#111"/>
<rect x="10" y="921" width="19" height="19" fill="#d8c8c4" stroke="#c02020" stroke-dasharray="2 1"/><rect x="20" y="926" width="8" height="11" fill="#000"/><circle cx="14" cy="934" r="7.500" fill="#2f72b8"/>
<path d="M6 948h28" stroke="#888"/>
<g stroke="#333"><rect x="9" y="962" width="14" height="19" fill="#c8d2e0"/><rect x="9" y="962" width="14" height="4" fill="#334"/><rect x="19" y="970" width="9" height="11" fill="#bcd"/><path d="M22 975h-8" stroke="#c00" stroke-width="1.500"/></g>
<rect x="52" y="968" width="17" height="8" fill="#eee" stroke="#222"/><path d="M56 980v4M65 980v4" stroke="#222"/><rect x="52" y="985" width="17" height="3" fill="#222"/>
<!-- right panel icons -->
<g stroke="#d03010" stroke-width="1.600"><path d="M1752 133v18M1743 142h18M1746 136l12 12M1758 136l-12 12"/></g><circle cx="1752" cy="142" r="4" fill="#f3b13a"/>
<path d="M1773 151c0-11 7-18 18-18v5c-8 0-13 5-13 13z" fill="#3f8fcd" stroke="#234"/><rect x="1787" y="147" width="4" height="4" fill="#eee" stroke="#333"/>
<g fill="#eee" stroke="#333"><rect x="1804" y="132" width="10" height="8"/><rect x="1800" y="145" width="6" height="6"/><rect x="1807" y="145" width="6" height="6"/><rect x="1814" y="145" width="6" height="6"/></g><path d="M1809 140v3M1803 145v-2h14v2" fill="none" stroke="#333"/>
<circle cx="1840" cy="141" r="9" fill="#ccc" stroke="#333"/><circle cx="1840" cy="141" r="5" fill="#eee" stroke="#333"/><circle cx="1840" cy="141" r="2" fill="#333"/><path d="M1828 136c-2 3-2 7 0 10M1825 134c-3 4-3 10 0 14" fill="none" stroke="#666"/>
<g stroke="#333" fill="#eee"><rect x="1858" y="131" width="21" height="16"/><rect x="1864" y="134" width="9" height="9"/><path d="M1862 152h13M1868 147v5" fill="none"/></g>
<path d="M1886 150l13-13-3-3 7-2 5 5-4 4-2-2-13 13z" fill="#a06a3a" stroke="#333"/>
<path d="M1896 195l4 4 4-4" fill="none" stroke="#444"/>
<g fill="none" stroke="#777"><path d="M1750 359h6M1756 353h8v12h-8zM1791 352v14M1797 352v14M1822 352l5 14 5-14M1837 352l-5 14"/><ellipse cx="1853" cy="360" rx="5" ry="6"/></g>
<rect x="1882" y="350" width="13" height="16" fill="#eee" stroke="#223"/><rect x="1882" y="350" width="13" height="4" fill="#2a3f96"/>
<!-- scene explorer -->
<path d="M1412 145h8l4 7-3 4 3 4-5 6h-7l3-6-3-3 3-4z" fill="url(#cy)"/>
<g stroke="#999" fill="none"><path d="M1598 153h10"/><rect x="1642" y="147" width="11" height="11"/><path d="M1689 147l10 11M1699 147l-10 11"/></g>
<g stroke="#a8a8a8" fill="none" stroke-width="2"><path d="M1565 199l12 12M1577 199l-12 12"/></g>
<path d="M1586 198h6l3 12h-3l-1-8h-3z" fill="#111"/><rect x="1594" y="197" width="11" height="17" fill="#888"/><path d="M1597 208h5M1600 206v5" stroke="#111"/>
<path d="M1610 199h11l-3 7h-11zM1610 205h11M1610 208h11" fill="#bcd8f0" stroke="#24507a"/><circle cx="1620" cy="209" r="3.500" fill="#e06010"/>
<path d="M1410 245h10l-5 6z" fill="#000"/>
<path d="M1415 252v56h8M1432 250v30h8M1432 280v10h8M1430 250" stroke="#444" stroke-dasharray="1 1" fill="none"/>
<use href="#bulb" x="1424" y="240" width="12" height="18"/><use href="#bulb" x="1443" y="259" width="12" height="18"/><use href="#bulb" x="1443" y="279" width="12" height="18"/><use href="#bulb" x="1424" y="299" width="12" height="18"/>
<path d="M1441 242l7-3 7 3-7 3zM1441 246l7 3 7-3M1441 250l7 3 7-3" fill="#aaa" stroke="#777"/>
<path d="M1441 305l7-3 7 3-7 3zM1441 309l7 3 7-3zM1441 313l7 3 7-3z" fill="#2f67c0" stroke="#173a7a"/>
<path d="M1461 262h-3v16h3M1470 262h3" fill="none" stroke="#444"/><circle cx="1465" cy="268" r="4.500" fill="none" stroke="#555"/><rect x="1465" y="268" width="7" height="7" fill="none" stroke="#555"/>
<circle cx="1465" cy="289" r="7.500" fill="#f0f0f0" stroke="#555"/>
<use href="#flake" x="1606" y="241" width="17" height="17"/><use href="#flake" x="1606" y="261" width="17" height="17"/><use href="#flake" x="1606" y="281" width="17" height="17"/><use href="#flake" x="1606" y="301" width="17" height="17"/>
<use href="#gpot" x="1638" y="240" width="19" height="19"/><use href="#gpot" x="1638" y="260" width="19" height="19"/><use href="#gpot" x="1638" y="280" width="19" height="19"/><use href="#gpot" x="1638" y="300" width="19" height="19"/>
<use href="#cube" x="1681" y="240" width="18" height="18"/><use href="#cube" x="1681" y="260" width="18" height="18"/><use href="#cube" x="1681" y="280" width="18" height="18"/><use href="#cube" x="1681" y="300" width="18" height="18"/>
<path d="M1654 228l3-5 3 5z" fill="#111"/>
<path d="M1558 351h6l-3 3z" fill="#333"/><path d="M1578 347l7-3 7 3-7 3zM1578 351l7 3 7-3M1578 355l7 3 7-3" fill="#c8b880" stroke="#6a6a5a" stroke-width=".8"/>
<g fill="none" stroke="#444"><rect x="1604" y="342" width="7" height="6"/><rect x="1600" y="353" width="4" height="5"/><rect x="1605" y="353" width="4" height="5"/><rect x="1610" y="353" width="4" height="5"/><path d="M1607 348v3M1602 353v-2h10v2"/></g>
<!-- asset tracking -->
<path d="M62 611h9l5 7-3 4 3 4-6 7h-8l3-7-3-3 3-5z" fill="url(#cy)"/>
<path d="M321 620h10" stroke="#888"/><rect x="360" y="614" width="10" height="10" fill="none" stroke="#777"/><path d="M406 614l10 10M416 614l-10 10" stroke="#888"/>
<rect x="62" y="666" width="11" height="13" fill="#fff" stroke="#2a7ab0"/><path d="M65 669h5v4h-5M70 676h-5" stroke="#1a9a30" stroke-width="1.600" fill="none"/>
<rect x="90" y="666" width="10" height="13" fill="#fff" stroke="#111"/><path d="M92 670h6M92 673h6M92 676h6" stroke="#111"/>
<rect x="114" y="666" width="14" height="13" fill="#dce8f0" stroke="#234"/><path d="M117 669h3v3h-3zM122 674h3v3h-3z" fill="#2a7a3a"/>
<rect x="142" y="667" width="12" height="12" fill="#fff" stroke="#246"/><path d="M142 671h12M142 675h12M146 667v12M150 667v12" stroke="#246"/>
<circle cx="390" cy="671" r="6" fill="#2a5ab0"/><text x="392" y="677" font-size="15" font-weight="bold" fill="#ccc" font-family="Liberation Sans">?</text>
<text x="413" y="677" font-size="15" font-weight="bold" fill="#aaa" font-family="Liberation Sans">?</text>
<path d="M84 720l6-3 6 3v7l-6 3-6-3z" fill="#aaa" stroke="#666"/>
<rect x="97" y="733" width="15" height="15" fill="#cfe6e6"/><text x="104" y="745" font-size="12" font-weight="bold" text-anchor="middle" style="fill:#13808c" font-family="Liberation Sans">3</text>
<path d="M120 753h11l-3 12h-11z" fill="#3ec04a" stroke="#141"/>
<use href="#png" x="129" y="770" width="16" height="16"/><use href="#png" x="129" y="789" width="16" height="16"/><use href="#png" x="129" y="808" width="16" height="16"/><use href="#png" x="129" y="827" width="16" height="16"/><use href="#png" x="129" y="846" width="16" height="16"/>
<!-- status icons -->
<path d="M1061 997a5 5 0 0 1 4 8l-2 8h-4l-2-8a5 5 0 0 1 4-8z" fill="#999" stroke="#777"/>
<rect x="1081" y="1004" width="10" height="10" fill="#aaa" stroke="#888"/><path d="M1083 1004v-3a3 3 0 0 1 6 0v3" fill="none" stroke="#888" stroke-width="1.500"/>
<rect x="1107" y="998" width="14" height="14" fill="#e0e0e0" stroke="#333"/><path d="M1114 996v18M1105 1005h18" stroke="#333"/><circle cx="1114" cy="1005" r="2.500" fill="#e8c83a" stroke="#333"/>
<path d="M1356 1024l4-3h10v14l-4 3h-10zM1356 1024h10v14M1366 1024l4-3" fill="none" stroke="#333"/>
<circle cx="1491" cy="1016" r="4.500" fill="none" stroke="#111" stroke-width="2"/><path d="M1496 1016h18M1506 1016v4M1512 1016v4" stroke="#111" stroke-width="2.500" fill="none"/>
<path d="M1584 1015l13 17" stroke="#c02020" stroke-width="2.500"/><path d="M1597 1032l2 3" stroke="#111" stroke-width="2"/>
<!-- playback -->
<g fill="#333">
<path d="M1701 998h2v12h-2zM1710 998l-6 6 6 6zM1711 998v12l5-6zM1715 998h2v12h-2z"/>
<path d="M1733 998l-6 6 6 6zM1734 998h2v12h-2zM1737 998h2v12h-2zM1740 998h2v12h-2z"/>
<path d="M1753 997l11 7-11 7z"/>
<path d="M1773 998h2v12h-2zM1776 998h2v12h-2zM1779 998h2v12h-2zM1782 998l7 6-7 6z"/>
<path d="M1799 998h2v12h-2zM1802 998l6 6-6 6zM1808 998l6 6-6 6zM1814 998h2v12h-2z"/>
<path d="M1701 1020h2v12h-2zM1710 1020l-6 6 6 6zM1711 1020l5 6-5 6zM1716 1020h2v12h-2z"/>
<path d="M1794 1022l-3 4h6zM1794 1033l-3-4h6z"/>
</g>
<g fill="none" stroke="#444"><circle cx="1833" cy="1002" r="5.500" stroke-width="1.400"/><path d="M1837 1006l5 6" stroke-width="2"/><path d="M1842 997h6M1845 994v6"/>
<path d="M1852 997h14v13h-14zM1859 997v13M1852 1003h14"/><circle cx="1864" cy="1009" r="3"/>
<path d="M1875 1000v-3h3M1889 997h3v3M1892 1009v3h-3M1878 1012h-3v-3"/></g><path d="M1879 1003l3-3h6v8l-3 3h-6z" fill="#7a9a5a" stroke="#333"/><path d="M1898 1000h8v6h-8z" fill="#e8e8e8" stroke="#444"/><path d="M1906 1000l3-3h5v9l-3 3h-5z" fill="#e8e8e8" stroke="#444"/><path d="M1898 1006h8v7h-8z" fill="#7a9a5a" stroke="#444"/>
<path d="M1807 1018h13v16h-13z" fill="#ccd8e6" stroke="#334"/><rect x="1807" y="1018" width="13" height="4" fill="#2a3f96"/><circle cx="1818" cy="1031" r="4" fill="#eee" stroke="#333"/>
<path d="M1830 1019l15 7-15 7z" fill="none" stroke="#777"/>
<path d="M1855 1036v-7l-3-4 2-1 3 3v-7h2v6l1-7h2l1 7 2-5h2l-2 11-2 5z" fill="#f2f2f2" stroke="#222"/>
<path d="M1880 1019v12l-5 3M1880 1031h9" fill="none" stroke="#222"/><path d="M1876 1026l6-6 6 8-6 2z" fill="#7ab85a" stroke="#333"/>
<path d="M1898 1018h11v11h-11zM1901 1029v5h13v-11h-5" fill="#e4e4e4" stroke="#333"/><path d="M1901 1021l5 5M1901 1024v-3h3" fill="none" stroke="#222"/>
<g fill="#111"><path d="M1766 1012h2.500v-2.500zM1850 1038h2.500v-2.500zM1872 1038h2.500v-2.500zM1893 1014h2.500v-2.500zM1892 1038h2.500v-2.500zM1915 1038h2.500v-2.500zM1916 1014h2v-2z"/></g>
<path d="M1593 1003l3 3 3-3M1686 1003l3 3 3-3" fill="none" stroke="#555"/>
</svg>
</body></html>
